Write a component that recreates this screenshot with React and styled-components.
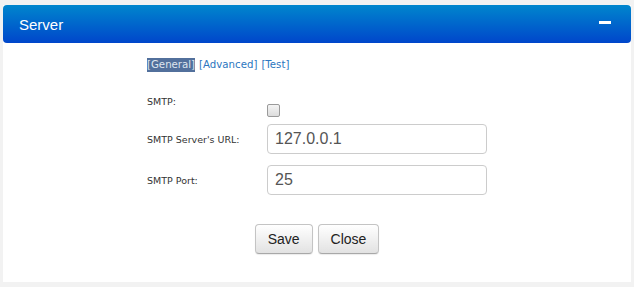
import styled, { createGlobalStyle } from "styled-components";

const Global = createGlobalStyle`
	html, body {
		margin: 0;
		padding: 0;
		background: #f2f2f2;
	}
`;

const Page = styled.div`
	padding: 5px 3px 5px 3px;
	width: 634px;
	height: 287px;
	box-sizing: border-box;
`;

const Panel = styled.div`
	background: #fff;
	height: 277px;
	display: flex;
	flex-direction: column;
`;

const Header = styled.div`
	display: flex;
	align-items: center;
	justify-content: space-between;
	height: 38px;
	padding: 0 20px 0 16px;
	border-radius: 4px;
	background: linear-gradient(to bottom, #0086cd, #0046cb);
	color: #fff;
	font-family: "Liberation Sans", Arial, sans-serif;
	font-size: 15px;
	box-sizing: border-box;
`;

const Minus = styled.span`
	display: block;
	width: 12px;
	height: 3px;
	background: #fff;
	margin-top: -4px;
`;

const Body = styled.div`
	display: flex;
	flex-direction: column;
	align-items: center;
	padding-top: 15px;
`;

const Content = styled.div`
	width: 340px;
	display: flex;
	flex-direction: column;
`;

const Tabs = styled.div`
	font-family: "DejaVu Sans", Verdana, sans-serif;
	font-size: 10.2px;
	line-height: 14px;
	display: flex;
	gap: 4px;
`;

const Tab = styled.a`
	color: ${(p) => (p.active ? "#dfe5ee" : "#2b76c0")};
	background: ${(p) => (p.active ? "#52709c" : "transparent")};
	text-decoration: none;
`;

const Form = styled.div`
	margin-top: 24px;
	display: flex;
	flex-direction: column;
	gap: 11px;
`;

const Row = styled.div`
	display: grid;
	grid-template-columns: 120px 220px;
	align-items: ${(p) => (p.top ? "start" : "center")};
`;

const Label = styled.label`
	font-family: "DejaVu Sans", Verdana, sans-serif;
	font-size: 9.5px;
	color: #333;
`;

const Check = styled.span`
	display: block;
	width: 11px;
	height: 11px;
	margin-top: 8px;
	border: 1px solid #9a9a9a;
	border-radius: 2px;
	background: linear-gradient(to bottom, #f4f4f4, #dcdcdc);
	margin-bottom: -4px;
`;

const Input = styled.input`
	height: 30px;
	width: 220px;
	box-sizing: border-box;
	border: 1px solid #cccccc;
	border-radius: 4px;
	padding: 0 7px;
	font-family: "Liberation Sans", Arial, sans-serif;
	font-size: 16px;
	color: #555;
	outline: none;
`;

const Buttons = styled.div`
	display: flex;
	justify-content: center;
	gap: 5px;
	margin-top: 29px;
`;

const Button = styled.button`
	height: 30px;
	padding: 0 12px;
	font-family: "Liberation Sans", Arial, sans-serif;
	font-size: 14px;
	color: #222;
	border: 1px solid #c4c4c4;
	border-bottom-color: #a8a8a8;
	border-radius: 4px;
	background: linear-gradient(to bottom, #ffffff, #e2e2e2);
	box-shadow: 0 1px 1px rgba(0, 0, 0, 0.08);
`;

export default function App() {
	return (
		<Page>
			<Global />
			<Panel>
				<Header>
					<span>Server</span>
					<Minus />
				</Header>
				<Body>
					<Content>
						<Tabs>
							<Tab active>[General]</Tab>
							<Tab>[Advanced]</Tab>
							<Tab>[Test]</Tab>
						</Tabs>
						<Form>
							<Row top>
								<Label>SMTP:</Label>
								<Check />
							</Row>
							<Row>
								<Label>SMTP Server's URL:</Label>
								<Input defaultValue="127.0.0.1" />
							</Row>
							<Row>
								<Label>SMTP Port:</Label>
								<Input defaultValue="25" />
							</Row>
						</Form>
					</Content>
					<Buttons>
						<Button>Save</Button>
						<Button>Close</Button>
					</Buttons>
				</Body>
			</Panel>
		</Page>
	);
}
